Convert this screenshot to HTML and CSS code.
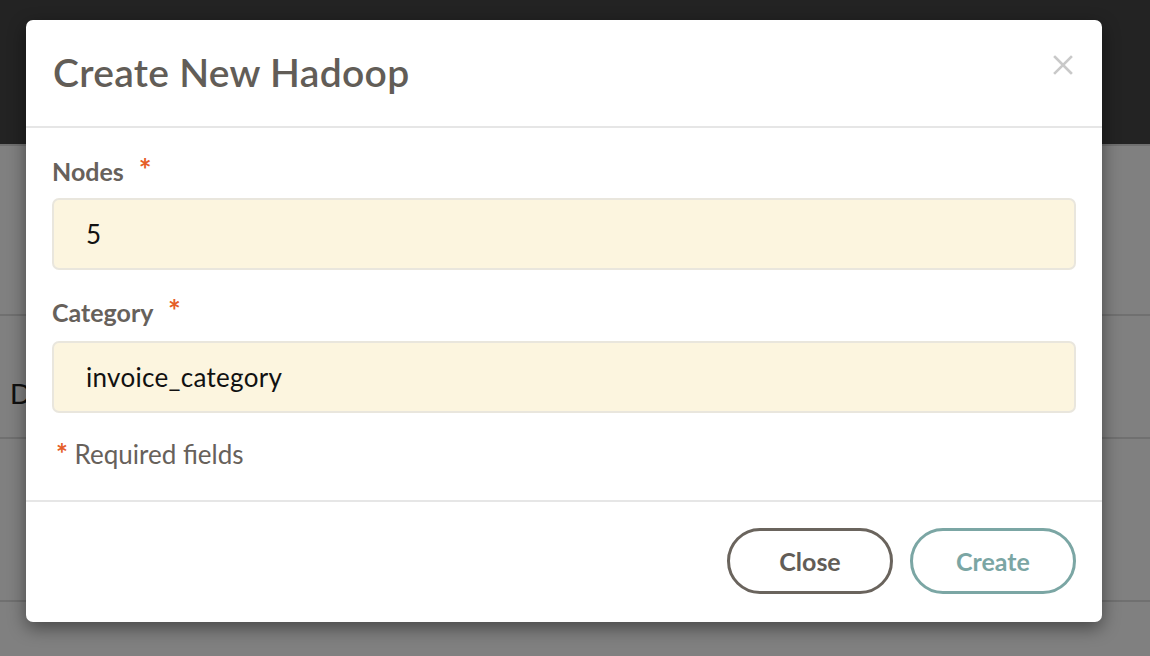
FILE: index.html
```html
<!DOCTYPE html>
<html>
<head>
<meta charset="utf-8">
<link rel="stylesheet" href="styles.css">
</head>
<body>
<div class="page">
  <div class="topbar"></div>
  <div class="row row-a"></div>
  <div class="row row-b"><span class="cell">D</span></div>
  <div class="row row-c"></div>
  <div class="row row-d"></div>
</div>
<div class="modal">
  <div class="modal-header">
    <h1 class="modal-title">Create New Hadoop</h1>
    <button class="close-x" aria-label="close">
      <svg width="20" height="20" viewBox="0 0 20 20"><path d="M2 2 L18 18 M18 2 L2 18" stroke="#c9c9c9" stroke-width="2.6" stroke-linecap="square"/></svg>
    </button>
  </div>
  <div class="modal-body">
    <div class="field">
      <label class="label">Nodes <span class="req">*</span></label>
      <div class="input">5</div>
    </div>
    <div class="field">
      <label class="label">Category <span class="req">*</span></label>
      <div class="input">invoice_category</div>
    </div>
    <p class="note"><span class="req">*</span> Required fields</p>
  </div>
  <div class="modal-footer">
    <button class="btn btn-close">Close</button>
    <button class="btn btn-create">Create</button>
  </div>
</div>
</body>
</html>
```
FILE: styles.css
```css
html, body {
  margin: 0;
  padding: 0;
  height: 656px;
  overflow: hidden;
  font-family: "Lato", "Open Sans", sans-serif;
}
.page {
  background: #808080;
  height: 656px;
  display: flex;
  flex-direction: column;
}
.topbar {
  height: 144px;
  background: #232323;
  border-bottom: 2px solid #6f6f6f;
}
.row {
  border-bottom: 2px solid #707070;
  box-sizing: border-box;
}
.row-a { height: 170px; }
.row-b { height: 123px; padding-top: 63px; }
.row-c { height: 163px; }
.row-d { flex: 1; border-bottom: none; }
.cell {
  display: block;
  font-family: "Liberation Sans", sans-serif;
  font-size: 30px;
  line-height: 1;
  color: #101010;
  margin-left: 10px;
}
.modal {
  position: absolute;
  left: 26px;
  top: 20px;
  width: 1076px;
  height: 602px;
  background: #fff;
  border-radius: 7px;
  box-shadow: 0 6px 18px rgba(0,0,0,0.45);
  display: flex;
  flex-direction: column;
}
.modal-header {
  height: 108px;
  border-bottom: 2px solid #e6e6e6;
  display: flex;
  align-items: center;
  justify-content: space-between;
  padding: 0 29px 0 27px;
  box-sizing: border-box;
  flex: none;
}
.modal-title {
  margin: 0;
  font-size: 39px;
  font-weight: 600;
  color: #625d57;
  letter-spacing: 0.3px;
  padding-bottom: 2px;
}
.close-x {
  background: none;
  border: none;
  padding: 0;
  width: 20px;
  height: 20px;
  margin-bottom: 16px;
  display: flex;
}
.modal-body {
  padding: 28px 26px 0 26px;
  height: 374px;
  box-sizing: border-box;
  border-bottom: 2px solid #e6e6e6;
  flex: none;
}
.field {
  margin-bottom: 29px;
}
.field + .field .label {
  margin-top: -2px;
  margin-bottom: 14px;
}
.label {
  display: block;
  font-size: 25px;
  font-weight: 700;
  color: #67615b;
  margin-bottom: 12px;
  line-height: 30px;
  height: 30px;
}
.req {
  color: #e55d27;
  font-size: 30px;
  line-height: 0;
  font-weight: 700;
  margin-left: 9px;
}
.note .req { margin-left: 4px; margin-right: 0; font-size: 28px; }
.input {
  height: 72px;
  box-sizing: border-box;
  background: #fcf5df;
  border: 2px solid #e9e6dd;
  border-radius: 7px;
  padding: 0 32px;
  display: flex;
  align-items: center;
  font-size: 26px;
  letter-spacing: 0.3px;
  color: #111;
}
.note {
  margin: -3px 0 0 0;
  font-size: 26px;
  line-height: 31px;
  color: #67615b;
}
.modal-footer {
  flex: 1;
  display: flex;
  justify-content: flex-end;
  align-items: center;
  gap: 17px;
  padding: 0 26px 2px 0;
}
.btn {
  width: 166px;
  height: 66px;
  border-radius: 33px;
  background: #fff;
  border: 3px solid;
  font-family: "Lato", "Open Sans", sans-serif;
  font-size: 25px;
  font-weight: 700;
}
.btn-close {
  border-color: #6a645d;
  color: #625d57;
}
.btn-create {
  border-color: #7ba6a4;
  color: #7ba6a4;
}
```
